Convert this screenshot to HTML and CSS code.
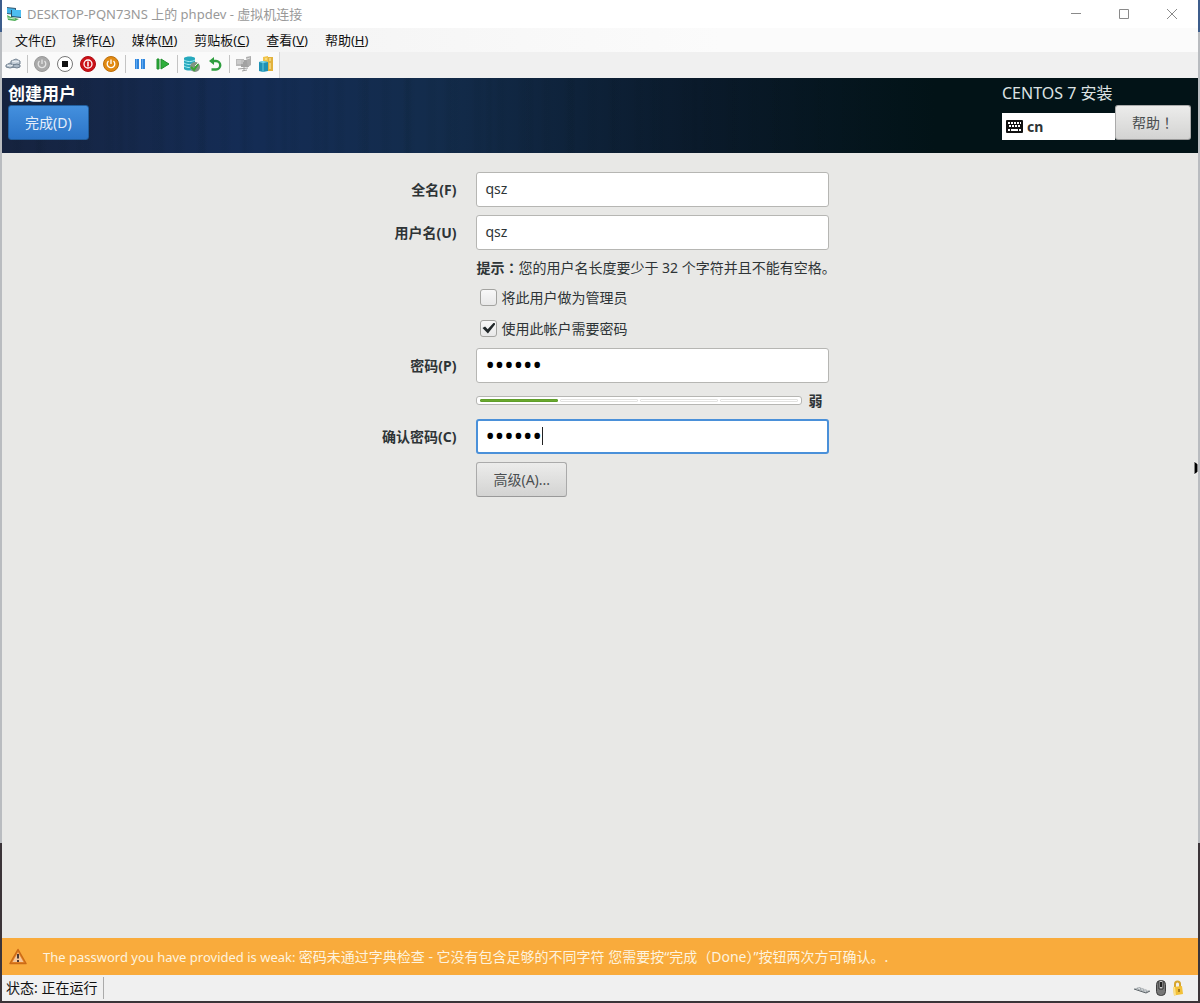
FILE: index.html
```html
<!DOCTYPE html>
<html lang="zh-CN">
<head>
    <meta charset="UTF-8">
    <title>DESKTOP-PQN73NS 上的 phpdev - 虚拟机连接</title>
    <link rel="stylesheet" href="styles.css">
</head>
<body>

<div class="window">
    <div class="titlebar">
        <svg class="app-icon" width="16" height="16" viewBox="0 0 16 16">
            <path d="M1 1l9 1v7l-9-1z" fill="#3a6078"/>
            <path d="M1 2l8 1v5L1 7z" fill="#3fb2e8"/>
            <path d="M5 4h10v8l-10-1z" fill="#27506c"/>
            <path d="M6 4h9v7l-9-1z" fill="#4dbdf0"/>
            <path d="M1 9l4 2 8 2-4 2-7-1z" fill="#4fae58"/>
            <path d="M2 12l7 1" stroke="#c7ecc9"/>
        </svg>
        <span class="title">DESKTOP-PQN73NS 上的 phpdev - 虚拟机连接</span>
        <button class="window-button" aria-label="最小化">
            <svg width="12" height="12" viewBox="0 0 12 12"><path d="M1 5.500h10"/></svg>
        </button>
        <button class="window-button" aria-label="最大化">
            <svg width="12" height="12" viewBox="0 0 12 12"><path d="M1.500 1.500h9v9h-9z"/></svg>
        </button>
        <button class="window-button" aria-label="关闭">
            <svg width="12" height="12" viewBox="0 0 12 12"><path d="M1 1l10 10M11 1L1 11"/></svg>
        </button>
    </div>

    <div class="menubar">
        <button class="menu-item">文件(<u>F</u>)</button>
        <button class="menu-item">操作(<u>A</u>)</button>
        <button class="menu-item">媒体(<u>M</u>)</button>
        <button class="menu-item">剪贴板(<u>C</u>)</button>
        <button class="menu-item">查看(<u>V</u>)</button>
        <button class="menu-item">帮助(<u>H</u>)</button>
    </div>

    <div class="toolbar">
        <div class="tools">
            <button class="tool" aria-label="Ctrl+Alt+Del">
                <svg width="16" height="16" viewBox="0 0 16 16">
                    <path d="M1 9l4-2 4 1v3l-4 1-4-1z" fill="#b3bfcb" stroke="#71808f"/>
                    <path d="M6 5l5-2 4 2v3l-4 1-5-1z" fill="#c4ced8" stroke="#71808f"/>
                    <path d="M8 9l4-1 3 1v2l-3 1-4-1z" fill="#aab7c4" stroke="#71808f"/>
                    <path d="M7 5l4 1 3-1M2 9l3 1 3-1" stroke="#eef2f5" fill="none"/>
                </svg>
            </button>
            <span class="separator"></span>
            <button class="tool" aria-label="启动">
                <svg width="16" height="16" viewBox="0 0 16 16">
                    <circle cx="8" cy="8" r="7.500" fill="#a9a9a9" stroke="#989898"/>
                    <path d="M8 3.500V8M5.500 5a3.800 3.800 0 1 0 5 0" fill="none" stroke="#e4e4e4" stroke-width="1.300"/>
                </svg>
            </button>
            <button class="tool" aria-label="强行关闭">
                <svg width="16" height="16" viewBox="0 0 16 16">
                    <circle cx="8" cy="8" r="7.500" fill="#fff" stroke="#777"/>
                    <path d="M5 5h6v6H5z" fill="#111"/>
                </svg>
            </button>
            <button class="tool" aria-label="关机">
                <svg width="16" height="16" viewBox="0 0 16 16">
                    <circle cx="8" cy="8" r="7.500" fill="#cc1118" stroke="#b00d13"/>
                    <circle cx="8" cy="8" r="4" fill="none" stroke="#fff" stroke-width="1.300"/>
                    <path d="M8 5.500v5" stroke="#fff" stroke-width="1.500"/>
                </svg>
            </button>
            <button class="tool" aria-label="保存">
                <svg width="16" height="16" viewBox="0 0 16 16">
                    <circle cx="8" cy="8" r="7.500" fill="#e28a12" stroke="#bb6e0b"/>
                    <path d="M8 3.500V8M5.500 5a3.800 3.800 0 1 0 5 0" fill="none" stroke="#fff" stroke-width="1.300"/>
                </svg>
            </button>
            <span class="separator"></span>
            <button class="tool" aria-label="暂停">
                <svg width="16" height="16" viewBox="0 0 16 16">
                    <path d="M3 3h4v10H3zM9 3h4v10H9z" fill="#2f86dd"/>
                    <path d="M4 3h1v10H4zM10 3h1v10h-1z" fill="#62aaf0"/>
                </svg>
            </button>
            <button class="tool" aria-label="重置">
                <svg width="16" height="16" viewBox="0 0 16 16">
                    <path d="M2 3h2v10H2zM6 3l8 5-8 5z" fill="#2eae3b" stroke="#1f8f2c"/>
                </svg>
            </button>
            <span class="separator"></span>
            <button class="tool" aria-label="检查点">
                <svg width="16" height="16" viewBox="0 0 16 16">
                    <path d="M0 2c2-2 9-2 11 0v11c-2 2-9 2-11 0z" fill="#27a9bd"/>
                    <path d="M0 4c3 2 8 2 11 0M0 7c3 2 8 2 11 0M0 10c3 2 8 2 11 0" stroke="#a6edf3" fill="none"/>
                    <circle cx="11" cy="11" r="5" fill="#829483"/>
                    <path d="M7 11l3 3 4-6" stroke="#36a834" stroke-width="2" fill="none"/>
                    <path d="M11 10l3-3" stroke="#e5f2e4"/>
                </svg>
            </button>
            <button class="tool" aria-label="还原">
                <svg width="16" height="16" viewBox="0 0 16 16">
                    <path d="M5 5h4a4 4 0 0 1 0 8.500H4.500" fill="none" stroke="#2e9e3e" stroke-width="2.400"/>
                    <path d="M7 1v8L2 5z" fill="#2e9e3e"/>
                </svg>
            </button>
            <span class="separator"></span>
            <button class="tool" aria-label="增强会话">
                <svg width="16" height="16" viewBox="0 0 16 16">
                    <path d="M0 3h8v7H0z" fill="#b9b9b9"/>
                    <path d="M5 4h8v7H5z" fill="#a2a2a2"/>
                    <path d="M10 1l5-1v9l-3 2z" fill="#adadad"/>
                    <path d="M2 13l10-1M6 15l5-1M8 10v5" stroke="#a0a0a0"/>
                    <path d="M1 5h7M1 7h6M11 3l3-1" stroke="#dedede"/>
                </svg>
            </button>
            <button class="tool" aria-label="共享">
                <svg width="16" height="16" viewBox="0 0 16 16">
                    <path d="M4 1l5-1v15H4z" fill="#f1c44a"/>
                    <path d="M9 1h5v14H9z" fill="#e2b23c"/>
                    <path d="M11 2v3M6 3h2M11 7v6" stroke="#fff0b0"/>
                    <path d="M0 6l4-1 5 1v9l-5 1-4-1z" fill="#1f91b5"/>
                    <path d="M0 6l4 1 5-1-5-1z" fill="#7fdcec"/>
                    <path d="M4 7v9" stroke="#65c9dc"/>
                </svg>
            </button>
        </div>
    </div>

    <header class="header">
        <div class="header-left">
            <h1 class="page-title">创建用户</h1>
            <button class="button primary">完成(D)</button>
        </div>
        <div class="header-right">
            <div class="product">CENTOS 7 安装</div>
            <div class="header-controls">
                <button class="keyboard">
                    <svg width="17" height="13" viewBox="0 0 17 13">
                        <rect width="17" height="13" rx="1" fill="#111"/>
                        <path d="M2 3h13M3 6h12" stroke="#fff" stroke-width="2" stroke-dasharray="2 1"/>
                        <path d="M2 10h2M5 10h7M13 10h2" stroke="#fff" stroke-width="2"/>
                    </svg>
                    cn
                </button>
                <button class="button">帮助<span class="mark" lang="zh-TW">！</span></button>
            </div>
        </div>
    </header>

    <main class="content">
        <form class="form">
            <label class="label" for="fullname">全名(F)</label>
            <input class="entry" id="fullname" type="text" value="qsz">

            <label class="label" for="username">用户名(U)</label>
            <input class="entry" id="username" type="text" value="qsz">

            <p class="hint"><b>提示<span class="mark" lang="zh-TW">：</span></b>您的用户名长度要少于 32 个字符并且不能有空格。</p>

            <label class="check"><input type="checkbox">将此用户做为管理员</label>
            <label class="check"><input type="checkbox" checked>使用此帐户需要密码</label>

            <label class="label" for="password">密码(P)</label>
            <input class="entry password" id="password" type="password" value="123456">

            <div class="strength">
                <div class="strength-bar">
                    <span class="step filled"></span>
                    <span class="step"></span>
                    <span class="step"></span>
                    <span class="step"></span>
                </div>
                <b class="strength-text">弱</b>
            </div>

            <label class="label" for="confirm">确认密码(C)</label>
            <div class="entry-wrap">
                <input class="entry password active" id="confirm" type="password" value="123456">
                <span class="caret"></span>
            </div>

            <button class="button advanced" type="button">高级(A)...</button>
        </form>
        <svg class="pointer" width="4" height="16" viewBox="0 0 4 16">
            <path d="M0 1l4 3v8l-4 3z" fill="#000" stroke="#fff"/>
        </svg>
    </main>

    <div class="warning">
        <svg width="18" height="17" viewBox="0 0 18 17">
            <path d="M9 1.500L17 15.500H1z" fill="#e5862a" stroke="#cb6a16" stroke-width="1.500" stroke-linejoin="round"/>
            <path d="M9 4.500L14.500 14h-11z" fill="#f6c79a"/>
            <path d="M9 6v4.500M9 12v2" stroke="#4b3a35" stroke-width="2"/>
        </svg>
        <p class="message"><span class="message-en">The password you have provided is weak: </span>密码未通过字典检查 - 它没有包含足够的不同字符 您需要按“完成（Done）”按钮两次方可确认。.</p>
    </div>

    <footer class="statusbar">
        <span class="status">状态: 正在运行</span>
        <svg width="16" height="16" viewBox="0 0 16 16">
            <path d="M0 9l5-2 11 4-4 2z" fill="#9aa0a4"/>
            <path d="M2 9l10 3M4 8l10 3" stroke="#e6e9eb" stroke-dasharray="2 1"/>
            <path d="M0 9l12 4 4-2" stroke="#5f666b" fill="none"/>
        </svg>
        <svg width="10" height="16" viewBox="0 0 10 16">
            <rect x="0.500" y="0.500" width="9" height="15" rx="4" fill="#777" stroke="#3e3e3e"/>
            <path d="M3 1v8h4V1" fill="#c8c8c8" stroke="#333"/>
            <path d="M5 2v5" stroke="#222" stroke-width="2"/>
        </svg>
        <svg width="12" height="16" viewBox="0 0 12 16">
            <path d="M3 8V4a2.500 2.500 0 0 1 5 0v4" fill="none" stroke="#d7a52b" stroke-width="2"/>
            <path d="M1 7l9-1 1 8-9 1.500z" fill="#f2c037"/>
            <path d="M1 7l2 0 1 8-2 .5z" fill="#fbe08a"/>
            <path d="M7 9v3" stroke="#8d6410" stroke-width="1.500"/>
        </svg>
    </footer>
</div>

</body>
</html>
```
FILE: styles.css
```css
* {
    box-sizing: border-box;
}

body {
    margin: 0;
    min-height: 100vh;
    display: flex;
    padding: 0 2px 2px;
    background: linear-gradient(#3d5d8c 32px, #b9bcc0 32px, #b9bcc0 84%, #3b3438 84%);
    font-family: "Noto Sans", "Noto Sans CJK SC", sans-serif;
    font-size: 14px;
    color: #2e3436;
}

button, input {
    font: inherit;
    color: inherit;
}

svg {
    flex: none;
}

/* centred full-width punctuation */
.mark {
    font-family: "Noto Sans CJK TC", sans-serif;
    line-height: 1;
}

.window {
    flex: 1;
    display: flex;
    flex-direction: column;
    background: #f0f0f0;
}

/* host window chrome */

.titlebar {
    height: 28px;
    display: flex;
    align-items: center;
    background: white;
    padding: 0 2px 0 4px;
}

.title {
    flex: 1;
    margin-left: 5px;
    padding-bottom: 2px;
    font-size: 13px;
    color: #999;
}

.window-button {
    width: 48px;
    height: 28px;
    padding: 0;
    border: 0;
    background: none;
    display: flex;
    align-items: center;
    justify-content: center;
}

.window-button path {
    fill: none;
    stroke: #8a8a8a;
}

.menubar {
    height: 24px;
    display: flex;
    align-items: center;
    padding: 0 0 2px 4px;
    background: linear-gradient(90deg, #f0f0f0, #fbfbfb 60%);
}

.menu-item {
    padding: 0 8px 0 9px;
    border: 0;
    background: none;
    font-size: 13px;
    color: #111;
}

.toolbar {
    height: 26px;
    display: flex;
}

.tools {
    display: flex;
    align-items: center;
    gap: 7px;
    padding: 0 4px 2px 3px;
    background: #fafafa;
    border-right: 1px solid #d8d8d8;
}

.tool {
    width: 16px;
    height: 16px;
    padding: 0;
    border: 0;
    background: none;
    display: flex;
}

.separator {
    width: 1px;
    height: 18px;
    background: #c4c4c4;
    margin: 0 -1px;
}

/* installer */

.header {
    height: 75px;
    display: flex;
    justify-content: space-between;
    padding: 4px 7px 0 6px;
    background:
        repeating-linear-gradient(90deg, transparent 0 9px, #0213170c 14px 17px, transparent 23px),
        repeating-linear-gradient(90deg, transparent 0 31px, #02131710 37px, transparent 41px),
        linear-gradient(90deg, #16233f, #142c55 20%, #132c4c 36%, #0a1a2b 58%, #021317 78%);
    color: white;
}

.page-title, .product {
    margin: 0;
    font-size: 17px;
    line-height: 23px;
}

.product {
    font-size: 16px;
    color: #dde2e3;
}

.header-controls {
    display: flex;
    align-items: flex-end;
}

.button {
    height: 35px;
    padding: 0 16px 2px;
    border: 1px solid #aaa;
    border-bottom-color: #999;
    border-radius: 3px;
    background: linear-gradient(#ececeb, #d3d3d2);
    color: #4a4e50;
}

.primary {
    border-color: #215f9f;
    background: linear-gradient(#4490de, #2b74c7);
    color: #e4eefa;
}

.keyboard {
    width: 113px;
    height: 27px;
    padding: 0 4px;
    border: 0;
    background: white;
    display: flex;
    align-items: center;
    gap: 4px;
    font-weight: bold;
    color: #2e3436;
}

.content {
    flex: 1;
    position: relative;
    background: #e8e8e6;
}

.form {
    display: grid;
    grid-template-columns: 38% 353px;
    gap: 8px 20px;
    align-items: center;
    padding-top: 19px;
}

.label {
    padding-bottom: 2px;
    text-align: right;
    font-weight: bold;
}

.entry {
    display: block;
    width: 100%;
    height: 35px;
    padding: 0 8px 2px;
    border: 1px solid #b6b6b3;
    border-radius: 3px;
    background: white;
}

.password {
    padding-bottom: 4px;
    font-size: 25px;
    color: black;
}

.active {
    border: 2px solid #4a90d9;
    padding: 0 7px 4px;
}

.entry-wrap {
    position: relative;
}

.caret {
    position: absolute;
    left: 66px;
    top: 8px;
    width: 1px;
    height: 18px;
    background: #222;
}

.hint, .check, .strength, .advanced {
    grid-column: 2;
}

.hint {
    height: 20px;
    margin: 0;
    line-height: 20px;
    white-space: nowrap;
}

.check {
    height: 23px;
    display: flex;
    align-items: center;
    gap: 4px;
    padding: 0 0 1px 4px;
}

.check input {
    appearance: none;
    width: 17px;
    height: 17px;
    margin: 0;
    border: 1px solid #a3a3a0;
    border-radius: 3px;
    background: linear-gradient(#f8f8f8, #e8e8e8);
    display: flex;
    align-items: center;
    justify-content: center;
}

.check input:checked::before {
    content: "";
    width: 13px;
    height: 11px;
    background: #22282a;
    clip-path: polygon(0 50%, 20% 36%, 40% 62%, 88% 0, 100% 14%, 42% 100%);
}

.strength {
    height: 20px;
    display: flex;
    align-items: center;
    gap: 6px;
    padding-bottom: 2px;
}

.strength-bar {
    width: 326px;
    height: 9px;
    display: flex;
    gap: 2px;
    padding: 2px 3px;
    border: 1px solid #b6b6b3;
    border-radius: 3px;
    background: white;
}

.step {
    flex: 1;
    border: 1px solid #e2e2e0;
    border-radius: 1px;
}

.filled {
    border-color: #5f9e2a;
    background: #6aa82f;
}

.advanced {
    justify-self: start;
}

.pointer {
    position: absolute;
    right: 0;
    top: 307px;
}

.warning {
    height: 37px;
    display: flex;
    align-items: center;
    gap: 16px;
    padding-left: 7px;
    background: #f9ab3c;
    color: #fdf3df;
    white-space: nowrap;
}

.message {
    margin: 0;
    padding-bottom: 2px;
}

.message-en {
    font-size: 13px;
}

.statusbar {
    height: 26px;
    display: flex;
    align-items: center;
    gap: 6px;
    padding-right: 14px;
    color: #111;
}

.status {
    height: 22px;
    line-height: 22px;
    padding: 0 6px 0 4px;
    border-right: 1px solid #aaa;
    margin-right: auto;
}
```
